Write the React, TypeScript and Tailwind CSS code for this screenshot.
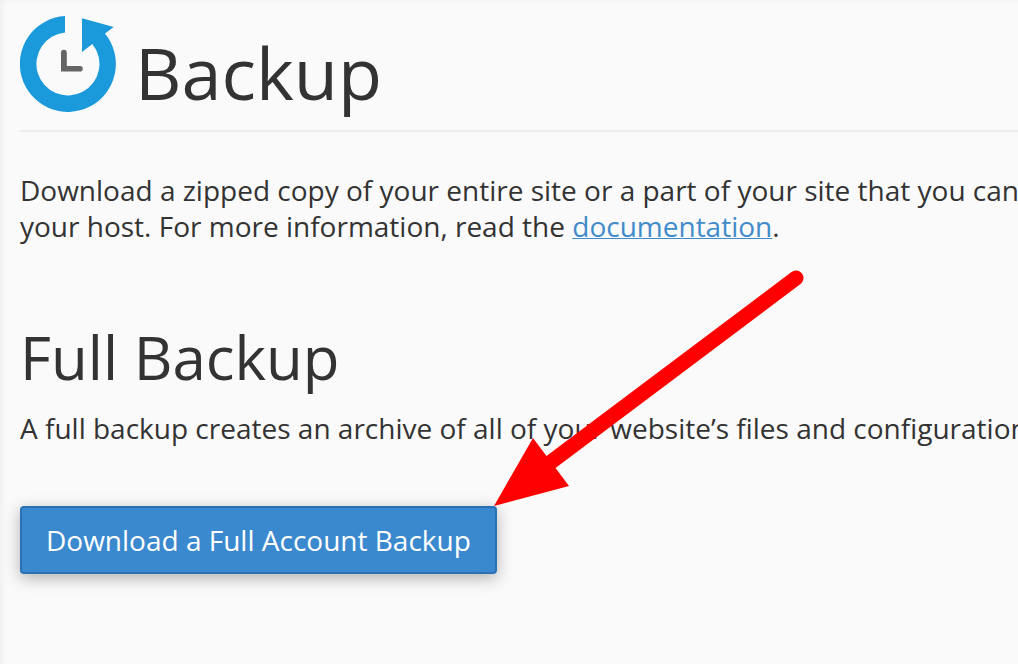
export default function App() {
  return (
    <main className="min-h-screen overflow-hidden bg-[#fafafa] pl-5 pt-0.5 font-['Open_Sans',sans-serif] text-[#333333] shadow-[inset_6px_4px_6px_-4px_rgba(0,0,0,0.05)]">
      <header className="flex h-[130px] items-start border-b-2 border-[#ececec]">
        <svg viewBox="0 0 96 96" className="mt-[14px] size-24 shrink-0" aria-hidden="true">
          <path
            d="M45 0A48 48 0 1 0 85 17.5L93.7 11L62 2.2V36L72.3 28A31.5 31.5 0 1 1 45 16.6Z"
            fill="#1b9adb"
          />
          <path
            d="M41 36.6A2.9 2.9 0 0 1 46.8 36.6V50H60A2.8 2.8 0 0 1 60 55.6H41Z"
            fill="#666666"
          />
        </svg>
        <h1 className="ml-[19px] mt-[22px] text-[72px] leading-[96px]">Backup</h1>
      </header>
      <p className="mt-10 whitespace-nowrap text-[28px] leading-9">
        Download a zipped copy of your entire site or a part of your site that you can
        <br />
        your host. For more information, read the{" "}
        <a href="#documentation" className="text-[#428bca] underline decoration-1">documentation</a>.
      </p>
      <section>
        <h2 className="mt-20 text-[60px] leading-[66px]">Full Backup</h2>
        <div className="relative mt-5">
          <p className="whitespace-nowrap text-[28px] leading-9">
            A full backup creates an archive of all of your website’s files and configuration
          </p>
          <svg viewBox="0 0 312 240" className="pointer-events-none absolute -top-[142px] left-[473px] h-[240px] w-[312px]" aria-hidden="true">
            <path d="M303 10L58 194" stroke="#f00" strokeWidth="15" strokeLinecap="round" />
            <path d="M1 238L40 170L76 218Z" fill="#f00" />
          </svg>
        </div>
        <button className="mt-[60px] h-[68px] rounded-[4px] border-2 border-[#2a70b5] bg-[#3a89ce] px-6 text-[28px] text-white shadow-[0_4px_16px_rgba(0,0,0,0.3)]">
          Download a Full Account Backup
        </button>
      </section>
    </main>
  );
}
